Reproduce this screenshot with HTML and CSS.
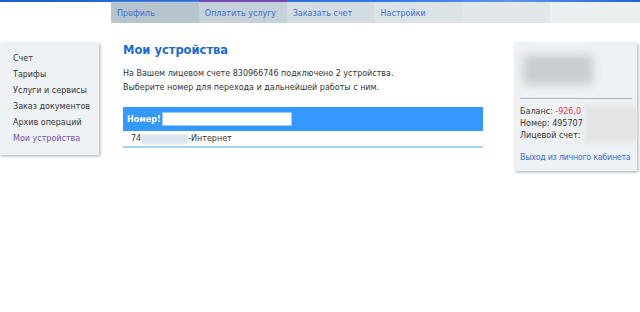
FILE: index.html
```html
<!DOCTYPE html>
<html lang="ru">
<head>
<meta charset="utf-8">
<link rel="stylesheet" href="styles.css">
</head>
<body>
<div class="topline"></div>
<nav class="tabs">
  <a class="tab t1">Профиль</a>
  <a class="tab t2">Оплатить услугу</a>
  <a class="tab t3">Заказать счет</a>
  <a class="tab t4">Настройки</a>
  <span class="tab t5"></span>
  <span class="tab t6"></span>
</nav>
<div class="main">
  <aside class="side">
    <a>Счет</a>
    <a>Тарифы</a>
    <a>Услуги и сервисы</a>
    <a>Заказ документов</a>
    <a>Архив операций</a>
    <a class="active">Мои устройства</a>
  </aside>
  <section class="content">
    <h1>Мои устройства</h1>
    <p class="intro">На Вашем лицевом счете 830966746 подключено 2 устройства.<br>Выберите номер для перехода и дальнейшей работы с ним.</p>
    <div class="table">
      <div class="thead"><span class="th">Номер!</span><span class="input"></span></div>
      <div class="row"><span>74</span><span class="blur-num"></span><span>-Интернет</span></div>
    </div>
  </section>
  <aside class="info">
    <div class="blur-name"></div>
    <div class="sep"></div>
    <div class="details">
      <div class="lines">
        <div>Баланс: <span class="neg">-926,0</span></div>
        <div>Номер: 495707</div>
        <div>Лицевой счет:</div>
      </div>
      <div class="blur-box"></div>
    </div>
    <a class="logout">Выход из личного кабинета</a>
  </aside>
</div>
</body>
</html>
```
FILE: styles.css
```css
html, body { margin: 0; padding: 0; background: #fff; }
body { font-family: "DejaVu Sans", Verdana, sans-serif; font-size: 8px; color: #333; width: 640px; height: 312px; overflow: hidden; }
a { text-decoration: none; }

.topline { height: 2px; background: linear-gradient(to right, #1b5fce, #2f7ae0 60%, #5b95e8 80%, #1e63d4); }

.tabs { display: flex; margin-left: 111px; height: 21px; }
.tab { width: 88px; height: 21px; box-sizing: border-box; padding: 7px 0 0 6px; color: #3d6fd0; font-size: 8px; }
.t1 { background: #b5c4cd; border-top: 1px solid #4f8be0; margin-top: -1px; height: 22px; }
.t2 { background: #c4d1d8; border-top: 2px solid #7545b0; margin-top: -2px; height: 23px; }
.t3 { background: #d3dce1; }
.t4 { background: #dce3e7; }
.t5 { background: #e3e7ea; width: 88px; }
.t6 { background: #ecf0f1; width: 90px; }

.main { display: flex; align-items: flex-start; margin-top: 20px; }

.side { width: 99px; box-sizing: border-box; background: #eef2f4; padding: 8px 0 8px 13px; box-shadow: 1px 1px 3px rgba(0,0,0,0.35); display: flex; flex-direction: column; }
.side a { color: #333; line-height: 16px; height: 16px; display: block; }
.side a.active { color: #7b4fb0; }

.content { width: 360px; margin-left: 24px; }
h1 { margin: 0; font-size: 11.5px; font-weight: bold; color: #1a6bd0; line-height: 14px; }
.intro { margin: 10px 0 0; line-height: 14px; color: #333; }

.table { margin-top: 12px; }
.thead { background: #3399ff; height: 24px; display: flex; align-items: center; padding-left: 4px; }
.th { color: #fff; font-weight: bold; }
.input { width: 128px; height: 12px; background: #fff; border: 1px solid #9cc7f5; margin-left: 1px; }
.row { height: 15px; display: flex; align-items: center; padding-left: 8px; border-bottom: 2px solid #a9d3ff; color: #333; }
.blur-num { width: 47px; height: 10px; background: #dde5ee; filter: blur(1px); }

.info { width: 122px; margin-left: 32px; background: #eef2f4; box-shadow: 1px 1px 3px rgba(0,0,0,0.35); box-sizing: border-box; padding: 12px 5px 9px 5px; }
.blur-name { width: 70px; height: 30px; margin-left: 3px; background: #c9cdd0; filter: blur(5px); }
.sep { height: 1px; background: #aab2b8; margin: 13px 0 7px 0; }
.details { display: flex; }
.lines div { line-height: 12px; color: #333; }
.neg { color: #ee3344; }
.blur-box { flex: 1; height: 36px; margin-left: 2px; margin-right: -5px; background: #e2e4e6; filter: blur(2px); }
.logout { display: block; margin-top: 11px; color: #3a6fcc; white-space: nowrap; letter-spacing: -0.3px; }
```
